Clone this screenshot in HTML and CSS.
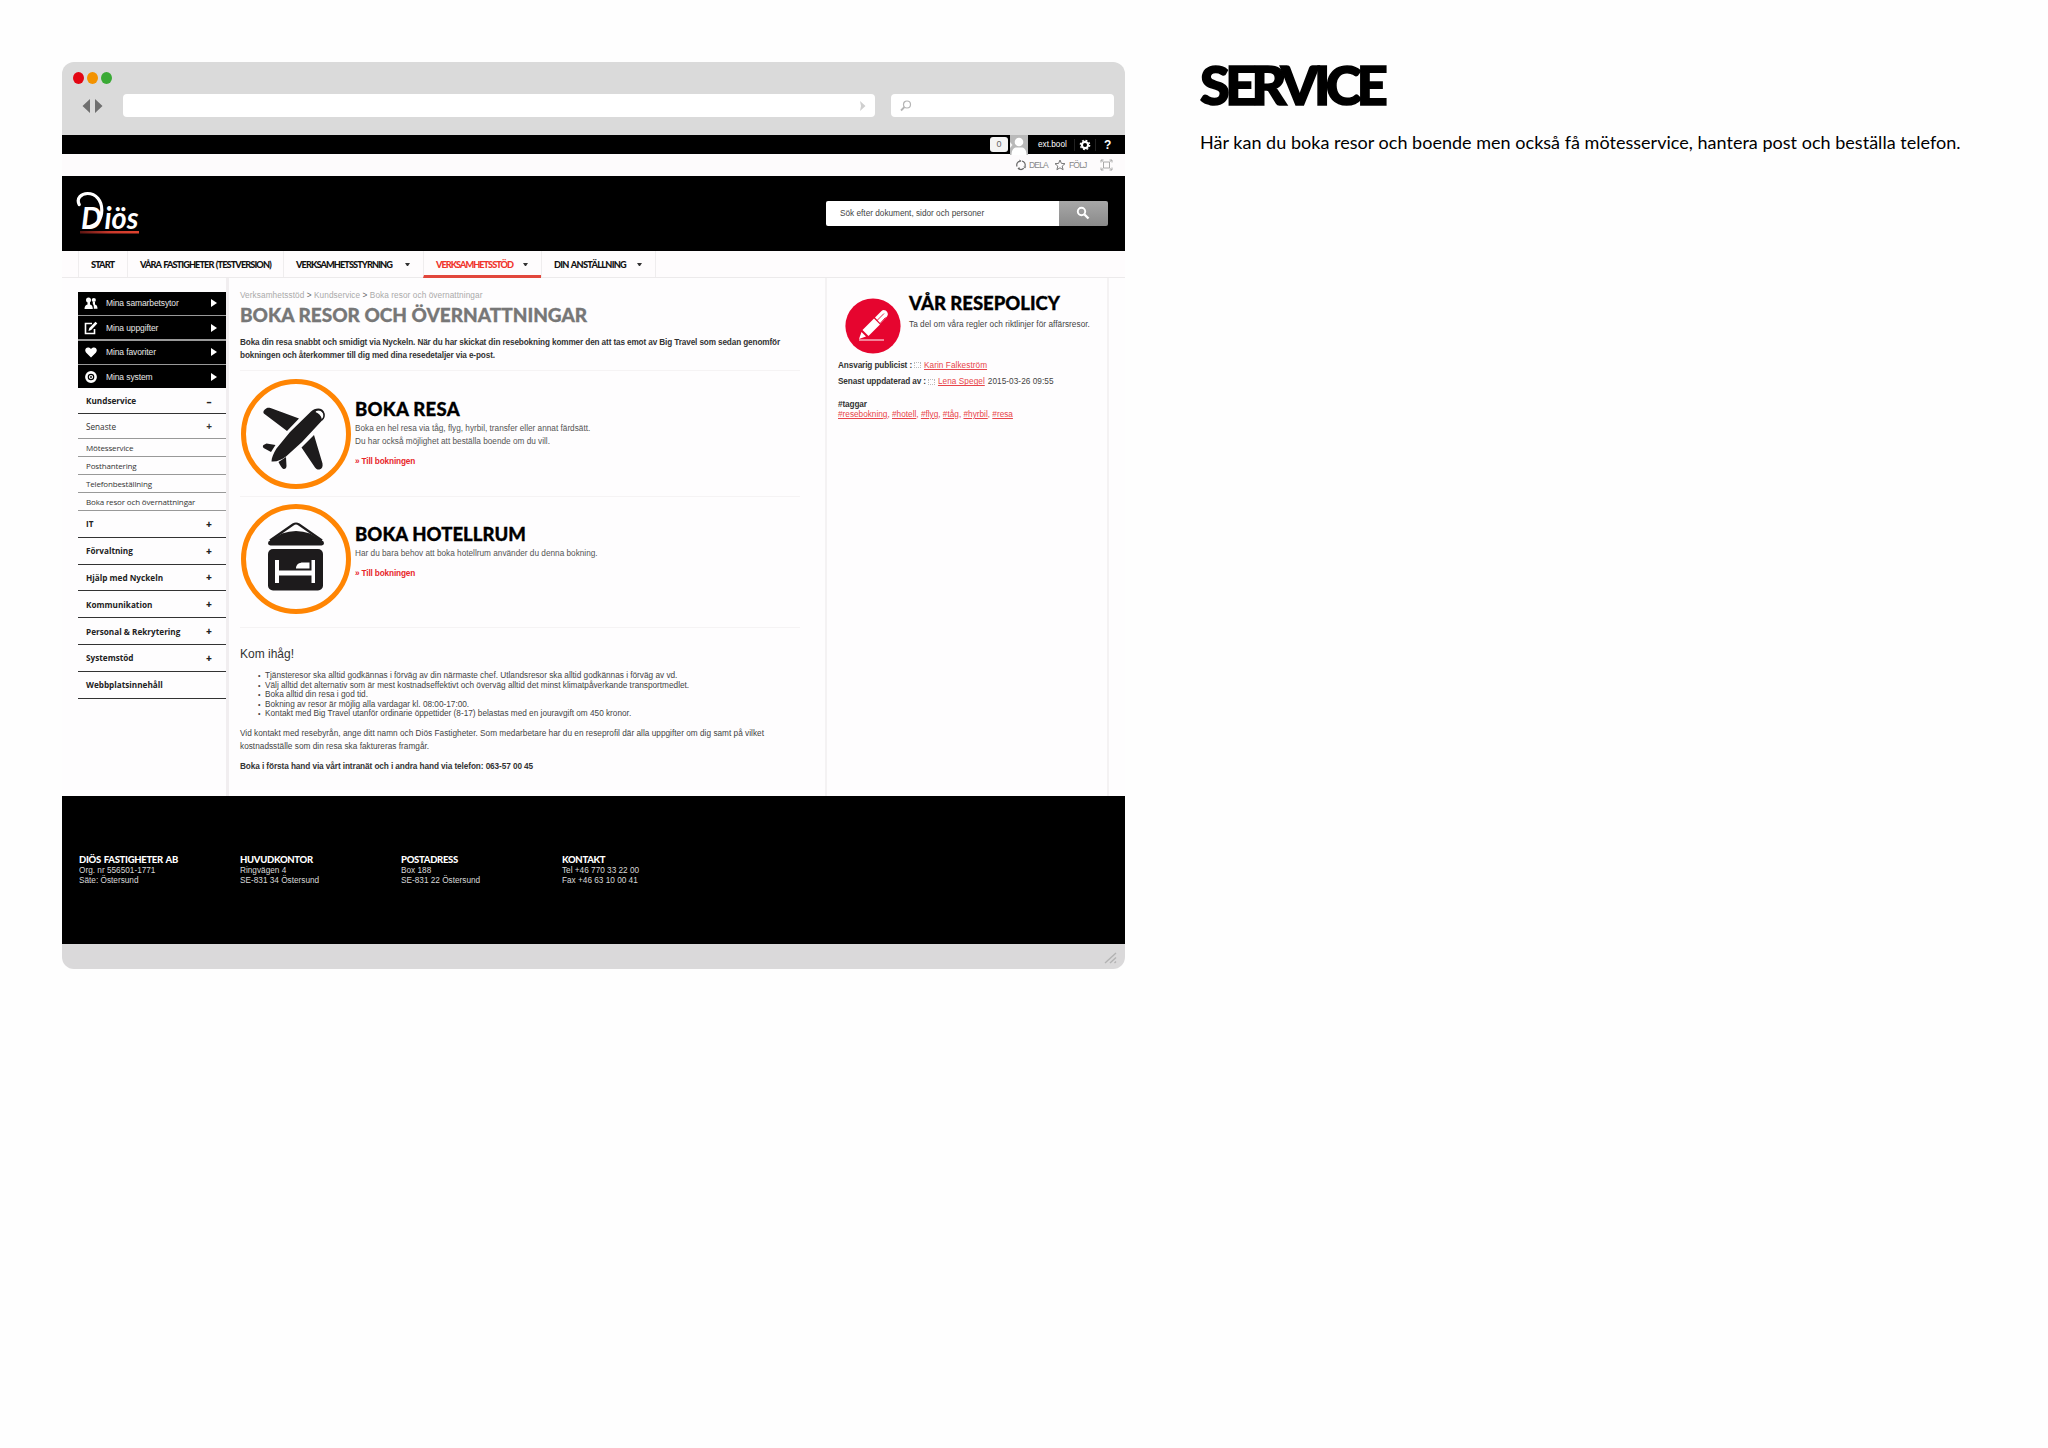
FILE: index.html
```html
<!DOCTYPE html>
<html lang="sv">
  <head>
    <meta charset="utf-8">
    <title>Service</title>
    <link rel="stylesheet" href="styles.css">
  </head>
  <body>
    <div class="browser">
      <div class="chrome">
        <div class="chrome__dots"><i class="red"></i><i class="orange"></i><i class="green"></i></div>
        <div class="chrome__bar">
          <svg class="chrome__arrows" width="22" height="16" viewBox="0 0 22 16"><path d="M8 1v14L0.500 8zM13 1v14l7.500-7z" fill="#6f6f6f"/></svg>
          <div class="chrome__url"><svg width="6" height="12" viewBox="0 0 6 12"><path d="M0 1l5.500 5L0 11l1-5z" fill="#cfcfcf"/></svg></div>
          <div class="chrome__search"><svg width="12" height="12" viewBox="0 0 12 12"><circle cx="7" cy="4.500" r="3.500" fill="none" stroke="#b5b5b5" stroke-width="1.200"/><path d="M4.500 7L1 10.500" stroke="#b5b5b5" stroke-width="1.800"/></svg></div>
        </div>
      </div>

      <div class="userbar">
        <span class="userbar__count">0</span>
        <svg class="userbar__avatar" width="18" height="20" viewBox="0 0 18 20"><path fill="#b9b9b9" d="M0 0h18v20H0z"/><path d="M0 7l2.500 3L0 13z" fill="#f4f4f4"/><circle cx="9" cy="7" r="4.300" fill="#fff"/><path d="M1.500 20c0-6 3-7.500 5-7.500h5c2 0 5 1.500 5 7.500z" fill="#fff"/></svg>
        <span class="userbar__name">ext.bool</span>
        <span class="userbar__gear"><svg width="12" height="12" viewBox="0 0 12 12"><circle cx="6" cy="6" r="3.100" fill="none" stroke="#fff" stroke-width="2.200"/><circle cx="6" cy="6" r="4.700" fill="none" stroke="#fff" stroke-width="1.300" stroke-dasharray="1.850 1.840"/></svg></span>
        <span class="userbar__help">?</span>
      </div>

      <div class="tools">
        <svg width="12" height="12" viewBox="0 0 12 12"><g fill="none" stroke="#666" stroke-width="1.200"><path d="M5 2A4.200 4.200 0 0 0 2 7.500"/><path d="M7 2A4.200 4.200 0 0 1 10 7.500"/><path d="M3.200 9.300A4.200 4.200 0 0 0 8.800 9.300"/></g><path d="M4.500.5v3L6.500 2zM8.300 7.500h3L10 9.500zM4.500 8v3L2.500 9.500z" fill="#666"/></svg>
        <span class="tools__dela">DELA</span>
        <svg width="12" height="12" viewBox="0 0 12 12"><path d="M6 1l1.400 3.400 3.600.3-2.800 2.400.9 3.600L6 8.800l-3.100 1.900.9-3.600L1 4.700l3.600-.3z" fill="none" stroke="#777"/></svg>
        <span class="tools__folj">FÖLJ</span>
        <svg width="13" height="12" viewBox="0 0 13 12"><g fill="none" stroke="#aaa"><path d="M3.500 3h6v6h-6zM1 3.500V1h2.500M9.500 1H12v2.500M12 8.500V11H9.500M3.500 11H1V8.500"/><path d="M1 1l2.500 2M12 1L9.500 3M12 11L9.500 9M1 11l2.500-2" stroke-width=".8"/></g></svg>
      </div>

      <div class="header">
        <svg class="logo" width="66" height="46" viewBox="0 0 66 46">
          <defs><linearGradient id="line"><stop offset="0" stop-color="#5a1512"/><stop offset=".5" stop-color="#c8382b"/><stop offset="1" stop-color="#e0432f"/></linearGradient></defs>
          <path d="M3.200 14.500C0 8 5.500 3.500 11.500 3.500c8.500 0 14.300 7 14.300 16.500 0 10-6 16.500-15 16.800" fill="none" stroke="#fff" stroke-width="3.200" stroke-linecap="round"/>
          <text class="logo__d" x="5" y="38.500" textLength="21" lengthAdjust="spacingAndGlyphs">D</text>
          <text class="logo__ios" x="28.500" y="38.500" textLength="34" lengthAdjust="spacingAndGlyphs">iös</text>
          <path d="M4 41h59v2.500H4z" fill="url(#line)"/>
        </svg>
        <div class="search">
          <div class="search__field">Sök efter dokument, sidor och personer</div>
          <div class="search__button"><svg width="14" height="14" viewBox="0 0 14 14"><circle cx="5.500" cy="5.500" r="3.700" fill="none" stroke="#fff" stroke-width="1.900"/><path d="M8.500 8.500L12.500 12.500" stroke="#fff" stroke-width="2.400"/></svg></div>
        </div>
      </div>

      <div class="nav">
        <div class="nav__item nav__item--start"><span>START</span></div>
        <div class="nav__item nav__item--vara"><span>VÅRA FASTIGHETER (TESTVERSION)</span></div>
        <div class="nav__item nav__item--styrning"><span>VERKSAMHETSSTYRNING</span><i></i></div>
        <div class="nav__item nav__item--active"><span>VERKSAMHETSSTÖD</span><i></i></div>
        <div class="nav__item nav__item--din"><span>DIN ANSTÄLLNING</span><i></i></div>
      </div>

      <div class="page">
        <div class="sidebar">
          <div class="mine">
            <div class="mine__row"><svg width="14" height="14" viewBox="0 0 14 14"><g fill="#fff"><circle cx="4.500" cy="4" r="2.500"/><path d="M.5 13c0-3 1-3.800 3-4.500V6h2.500v2.500c2 .7 2.800 1.500 2.800 4.500z"/><circle cx="9.800" cy="4" r="2.100"/><path d="M9.800 12.800h3.700c0-3-.8-3.800-2.500-4.300V6H8.800v2c.8.800 1.200 2.300 1 4.800z"/></g></svg><span>Mina samarbetsytor</span><i></i></div>
            <div class="mine__row"><svg width="14" height="14" viewBox="0 0 14 14"><path d="M8 2.500H1.500v10h9V8" fill="none" stroke="#fff" stroke-width="1.600"/><path d="M4.500 10l.8-3L11.500.8l1.800 1.800L7.200 9z" fill="#fff"/></svg><span>Mina uppgifter</span><i></i></div>
            <div class="mine__row"><svg width="14" height="14" viewBox="0 0 14 14"><path d="M7 12.500L2 7.500C-.5 4 3.500.5 7 4c3.500-3.500 7.500 0 5 3.500z" fill="#fff"/></svg><span>Mina favoriter</span><i></i></div>
            <div class="mine__row"><svg width="14" height="14" viewBox="0 0 14 14"><circle cx="7" cy="7" r="4.600" fill="none" stroke="#fff" stroke-width="2.600"/><circle cx="7" cy="7" r="1.500" fill="none" stroke="#fff" stroke-width="1.200"/></svg><span>Mina system</span><i></i></div>
          </div>
          <div class="menu">
            <div class="menu__row menu__row--open"><span>Kundservice</span><b>–</b></div>
            <div class="menu__row menu__row--latest"><span>Senaste</span><b>+</b></div>
            <div class="menu__row menu__row--sub"><span>Mötesservice</span></div>
            <div class="menu__row menu__row--sub"><span>Posthantering</span></div>
            <div class="menu__row menu__row--sub"><span>Telefonbeställning</span></div>
            <div class="menu__row menu__row--sub"><span>Boka resor och övernattningar</span></div>
            <div class="menu__row"><span>IT</span><b>+</b></div>
            <div class="menu__row"><span>Förvaltning</span><b>+</b></div>
            <div class="menu__row"><span>Hjälp med Nyckeln</span><b>+</b></div>
            <div class="menu__row"><span>Kommunikation</span><b>+</b></div>
            <div class="menu__row"><span>Personal &amp; Rekrytering</span><b>+</b></div>
            <div class="menu__row"><span>Systemstöd</span><b>+</b></div>
            <div class="menu__row"><span>Webbplatsinnehåll</span></div>
          </div>
        </div>

        <div class="main">
          <div class="crumbs">Verksamhetsstöd <b>&gt;</b> Kundservice <b>&gt;</b> Boka resor och övernattningar</div>
          <h1>BOKA RESOR OCH ÖVERNATTNINGAR</h1>
          <p class="intro">Boka din resa snabbt och smidigt via Nyckeln. När du har skickat din resebokning kommer den att tas emot av Big Travel som sedan genomför<br>bokningen och återkommer till dig med dina resedetaljer via e-post.</p>

          <div class="booking booking--trip">
            <svg class="booking__icon" width="112" height="110" viewBox="0 0 112 110">
              <circle cx="56" cy="55" r="52.500" fill="none" stroke="#ff8503" stroke-width="5"/>
              <g fill="#1d1b1c">
                <path d="M71 32.500c3-3 8-4 11-2s3.500 7 .5 10.500L62 63 46 77.500c-4 3-9 5.500-14.500 5 0-4 2-8 5-13L50 53z"/>
                <path d="M25.500 30c1.500-1.500 3-1.500 5-1L59 39.500 47 52 24.500 35c-2-1.500-1-3.500 1-5z"/>
                <path d="M61.500 68.500L74 56l8.500 28.500c.5 3-.5 5.500-3 6-2 .3-3.500-.5-4.500-2z"/>
                <path d="M23.500 66l3-1.500 9 1.500-4.500 7-6.500-3.500c-2-1-2-2.500-1-3.500z"/>
                <path d="M38.500 83l7.500-5 .5 9c0 2-1.500 3.500-3 3-1.500-.4-3-3-5-7z"/>
              </g>
              <path d="M76.500 31.500c4-1 7 1.500 7 5.500l-1.500 3.500c-1-4-3-6-6.500-7.500z" fill="#fff"/>
              <path d="M75 32c5-3 10 1 9 6-.3 1-1 2-2 3" fill="none" stroke="#1d1b1c" stroke-width="1.200"/>
            </svg>
            <div class="booking__text">
              <h2>BOKA RESA</h2>
              <p>Boka en hel resa via tåg, flyg, hyrbil, transfer eller annat färdsätt.<br>Du har också möjlighet att beställa boende om du vill.</p>
              <a>» Till bokningen</a>
            </div>
          </div>

          <div class="booking booking--hotel">
            <svg class="booking__icon" width="112" height="110" viewBox="0 0 112 110">
              <circle cx="56" cy="55" r="52.500" fill="none" stroke="#ff8503" stroke-width="5"/>
              <path d="M30 36.500L53 20.500q3-2 6 0L82 36.500" fill="none" stroke="#1d1b1c" stroke-width="2.200"/>
              <path d="M42 29.500Q56 24.500 70 29.500L83.500 37.500q1.500 3.500-2 4h-51q-3.500-.5-2-4z" fill="#1d1b1c"/>
              <rect x="28" y="45" width="55" height="41.500" rx="5" fill="#1d1b1c"/>
              <path d="M35 56h4v10.500h32.500V56H75v23h-3.500v-7.500H39V79h-4zM56 64.500c0-4 3-6 7-6h6.500v6z" fill="#fff"/>
            </svg>
            <div class="booking__text">
              <h2 class="hotel">BOKA HOTELLRUM</h2>
              <p>Har du bara behov att boka hotellrum använder du denna bokning.</p>
              <a>» Till bokningen</a>
            </div>
          </div>

          <h3>Kom ihåg!</h3>
          <ul>
            <li>Tjänsteresor ska alltid godkännas i förväg av din närmaste chef. Utlandsresor ska alltid godkännas i förväg av vd.</li>
            <li>Välj alltid det alternativ som är mest kostnadseffektivt och överväg alltid det minst klimatpåverkande transportmedlet.</li>
            <li>Boka alltid din resa i god tid.</li>
            <li>Bokning av resor är möjlig alla vardagar kl. 08:00-17:00.</li>
            <li>Kontakt med Big Travel utanför ordinarie öppettider (8-17) belastas med en jouravgift om 450 kronor.</li>
          </ul>
          <p class="note">Vid kontakt med resebyrån, ange ditt namn och Diös Fastigheter. Som medarbetare har du en reseprofil där alla uppgifter om dig samt på vilket<br>kostnadsställe som din resa ska faktureras framgår.</p>
          <p class="phone">Boka i första hand via vårt intranät och i andra hand via telefon: 063-57 00 45</p>
        </div>

        <div class="aside">
          <div class="policy">
            <svg width="56" height="56" viewBox="0 0 56 56">
              <circle cx="28" cy="28" r="27.600" fill="#e6052f"/>
              <path d="M14 42h25" stroke="#fff" stroke-width="1"/>
              <g fill="#fff"><path d="M14 41l2.500-7 4.500 4.500z"/><path d="M17.500 32L29 20.500l6 6L23.500 38z"/><path d="M30 19.500l6.500-6.500c3-3 8.500 2 5.500 5.500l-6.500 7z"/></g>
              <path d="M32 22.500l7-7M35.500 25l5-5.500" stroke="#e6052f" stroke-width=".9"/>
            </svg>
            <div class="policy__text">
              <h2>VÅR RESEPOLICY</h2>
              <p>Ta del om våra regler och riktlinjer för affärsresor.</p>
            </div>
          </div>
          <p class="meta"><b>Ansvarig publicist :</b><i></i><a>Karin Falkeström</a></p>
          <p class="meta"><b>Senast uppdaterad av :</b><i></i><a>Lena Spegel</a><span>2015-03-26 09:55</span></p>
          <div class="tags"><b>#taggar</b><br><a>#resebokning</a>, <a>#hotell</a>, <a>#flyg</a>, <a>#tåg</a>, <a>#hyrbil</a>, <a>#resa</a></div>
        </div>
      </div>

      <div class="footer">
        <div><h4>DIÖS FASTIGHETER AB</h4>Org. nr 556501-1771<br>Säte: Östersund</div>
        <div><h4>HUVUDKONTOR</h4>Ringvägen 4<br>SE-831 34 Östersund</div>
        <div><h4>POSTADRESS</h4>Box 188<br>SE-831 22 Östersund</div>
        <div><h4>KONTAKT</h4>Tel +46 770 33 22 00<br>Fax +46 63 10 00 41</div>
      </div>
      <div class="status"><svg width="14" height="12" viewBox="0 0 14 12"><path d="M1 11L12 1M6 11l6-5.500M10.500 11l1.500-1.500" stroke="#b3b3b3" stroke-width="1.400"/></svg></div>
    </div>

    <div class="caption">
      <h1>SERVICE</h1>
      <p>Här kan du boka resor och boende men också få mötesservice, hantera post och beställa telefon.</p>
    </div>
  </body>
</html>
```
FILE: styles.css
```css
* {
  margin: 0;
  padding: 0;
  box-sizing: border-box;
}
body {
  display: flex;
  align-items: flex-start;
  gap: 75px;
  width: 2048px;
  height: 1448px;
  padding: 62px 0 0 62px;
  background: #fefefe;
  font-family: "Liberation Sans", Arial, sans-serif;
  font-size: 8.24px;
  color: #444;
  white-space: nowrap;
  overflow: hidden;
}
svg {
  display: block;
  flex: none;
}
h1, h2, h4 {
  font-family: Lato, sans-serif;
  font-weight: 900;
}

/* Browser window */
.browser {
  flex: none;
  width: 1063px;
  height: 907px;
  border-radius: 12px;
  background: #fefdfe;
  overflow: hidden;
}
.chrome {
  height: 73px;
  padding: 10px 10px 0 11px;
  background: #dadada;
}
.chrome__dots {
  display: flex;
  gap: 3px;
}
.chrome__dots i {
  width: 11px;
  height: 12px;
  border-radius: 50%;
}
.red { background: #e30613; }
.orange { background: #f39200; }
.green { background: #3aaa35; }
.chrome__bar {
  display: flex;
  align-items: center;
  height: 23px;
  margin-top: 10px;
}
.chrome__arrows {
  margin: 0 19px 0 9px;
}
.chrome__url, .chrome__search {
  display: flex;
  align-items: center;
  height: 23px;
  border-radius: 4px;
  background: #fff;
}
.chrome__url {
  width: 752px;
  padding-right: 9px;
  justify-content: flex-end;
}
.chrome__search {
  width: 223px;
  margin-left: 16px;
  padding-left: 9px;
}
.userbar {
  display: flex;
  align-items: center;
  justify-content: flex-end;
  height: 19px;
  padding-right: 1px;
  background: #000;
  color: #fff;
}
.userbar__count {
  width: 18px;
  height: 15px;
  margin-right: 2px;
  border-radius: 3px;
  background: #f4f4f4;
  color: #666;
  font-size: 9px;
  line-height: 14px;
  text-align: center;
}
.userbar__name {
  width: 46px;
  padding-left: 10px;
}
.userbar__gear {
  display: flex;
  justify-content: center;
  width: 22px;
  border: solid #222;
  border-width: 0 1px;
}
.userbar__help {
  width: 28px;
  padding-left: 8px;
  font-size: 12px;
  font-weight: 700;
}
.tools {
  display: flex;
  align-items: center;
  height: 22px;
  padding-left: 953px;
  background: #fdfbfc;
  color: #888;
  font-size: 8.6px;
  letter-spacing: -.9px;
}
.tools__dela {
  width: 25px;
  margin-left: 2px;
}
.tools__folj {
  width: 31px;
  margin-left: 3px;
}
.header {
  display: flex;
  justify-content: space-between;
  height: 75px;
  padding: 14px 17px 0 14px;
  background: #000;
}
.logo text {
  fill: #fff;
  font-family: Lato, sans-serif;
  font-style: italic;
  font-weight: 700;
}
.logo .logo__d {
  font-size: 31px;
}
.logo .logo__ios {
  font-size: 30px;
}
.search {
  display: flex;
  width: 282px;
  height: 25px;
  margin-top: 11px;
  border-radius: 2px;
  overflow: hidden;
}
.search__field {
  flex: 1;
  padding-left: 14px;
  background: #fff;
  line-height: 26px;
}
.search__button {
  width: 49px;
  padding: 5px 0 0 17px;
  background: linear-gradient(#a8a8a8, #8a8a8a);
}
.nav {
  display: flex;
  height: 27px;
  padding-left: 16px;
  border-bottom: 1px solid #eceaeb;
  background: #fefcfd;
}
.nav__item {
  display: flex;
  align-items: center;
  padding: 0 13px 0 12px;
  border-left: 1px solid #efedee;
  color: #111;
  font-family: Lato, sans-serif;
  font-size: 9.2px;
  font-weight: 900;
  letter-spacing: -.92px;
  word-spacing: 1px;
}
.nav__item i {
  width: 5px;
  margin-left: auto;
  border: 2.5px solid transparent;
  border-top: 3px solid #333;
  border-bottom: 0;
}
.nav__item--start { width: 49px; }
.nav__item--vara {
  width: 156px;
  letter-spacing: -.9px;
}
.nav__item--styrning { width: 140px; }
.nav__item--active {
  width: 118px;
  height: 27px;
  padding-top: 3px;
  border-bottom: 3px solid #e2473c;
  color: #f0342c;
  letter-spacing: -1px;
}
.nav__item--din {
  width: 115px;
  border-right: 1px solid #efedee;
  letter-spacing: -.73px;
}

/* Content columns */
.page {
  display: flex;
  height: 518px;
  padding-left: 16px;
}
.sidebar {
  width: 151px;
  padding-top: 14px;
  border-right: 3px solid #f1eef0;
}
.mine {
  display: grid;
  gap: 1.5px;
  height: 96px;
  background: #999;
}
.mine__row {
  display: flex;
  align-items: center;
  padding-left: 6px;
  background: #000;
  color: #e8e8e8;
  font-size: 8.5px;
  letter-spacing: -.11px;
}
.mine__row span {
  margin-left: 8px;
}
.mine__row i {
  margin-left: auto;
  margin-right: 9px;
  border: 4px solid transparent;
  border-left: 6px solid #fff;
  border-right: 0;
}
.menu {
  font-family: "Open Sans", sans-serif;
  font-size: 8.2px;
}
.menu__row {
  display: flex;
  align-items: center;
  justify-content: space-between;
  height: 26.8px;
  padding: 0 13px 0 8px;
  border-bottom: 1.5px solid #333;
  color: #222;
  font-weight: 700;
}
.menu__row b {
  width: 8px;
  font-size: 10px;
  line-height: 10px;
  text-align: center;
}
.menu__row--open {
  height: 26px;
}
.menu__row--latest, .menu__row--sub {
  border-bottom: 1px solid #999;
  color: #333;
  font-weight: 400;
}
.menu__row--latest {
  height: 25px;
}
.menu__row--sub {
  height: 18px;
  font-size: 8px;
  letter-spacing: -.15px;
}
.main {
  width: 596px;
  padding: 10px 25px 0 11px;
}
.crumbs {
  height: 14px;
  line-height: 15px;
  color: #aaa;
  letter-spacing: .08px;
}
.crumbs b {
  color: #666;
  font-weight: 400;
}
.main h1 {
  height: 24px;
  margin-top: 1px;
  color: #777;
  font-size: 19px;
  line-height: 24px;
  -webkit-text-stroke: .3px #777;
}
.intro {
  margin-top: 9px;
  color: #333;
  font-size: 8.2px;
  font-weight: 700;
  letter-spacing: -.12px;
  line-height: 13px;
}
.booking {
  display: flex;
  border-top: 1px solid #f5f3f4;
}
.booking--trip {
  height: 126px;
  margin-top: 8px;
  padding-top: 8px;
}
.booking--hotel {
  height: 132px;
  padding-top: 7px;
  border-bottom: 1px solid #f5f3f4;
}
.booking__text {
  padding: 19px 0 0 3px;
}
h2 {
  color: #000;
  font-size: 18.5px;
  line-height: 23px;
  -webkit-text-stroke: .3px #000;
}
.booking h2 {
  height: 24px;
  letter-spacing: .28px;
}
.booking .hotel {
  letter-spacing: .05px;
}
.booking p {
  color: #555;
  line-height: 13px;
}
.booking a {
  display: block;
  margin-top: 7px;
  color: #e8262a;
  font-weight: 700;
  letter-spacing: -.15px;
  line-height: 13px;
}
h3 {
  margin-top: 18px;
  color: #333;
  font-size: 12px;
  font-weight: 400;
  line-height: 16px;
}
.main ul {
  margin-top: 9px;
  padding-left: 25px;
  line-height: 9.6px;
  list-style: none;
}
.main li {
  display: flex;
}
.main li::before {
  content: "•";
  width: 7px;
  margin-left: -7px;
  font-size: 7px;
}
.note {
  margin-top: 8px;
  line-height: 13px;
  letter-spacing: .02px;
}
.phone {
  margin-top: 7px;
  color: #333;
  font-weight: 700;
  letter-spacing: -.09px;
  line-height: 13px;
}
.aside {
  width: 284px;
  padding: 14px 0 0 11px;
  border: solid #f4f2f3;
  border-width: 0 2px;
}
.policy {
  display: flex;
  gap: 8px;
  padding-left: 7px;
}
.policy svg {
  margin-top: 6px;
}
.policy p {
  margin-top: 3px;
  letter-spacing: .04px;
  line-height: 13px;
}
.meta {
  display: flex;
  align-items: center;
  height: 16.5px;
}
.policy + .meta {
  margin-top: 3px;
}
.meta i {
  width: 7px;
  height: 6px;
  margin: 0 3px 0 2px;
  border: 1px dotted #bbb;
}
.meta a, .meta span {
  letter-spacing: .05px;
}
.meta span {
  margin-left: 3px;
}
.aside b {
  color: #333;
  letter-spacing: -.12px;
}
.aside a {
  color: #e8454a;
  text-decoration: underline;
}
.tags {
  margin-top: 10px;
  color: #e8454a;
  line-height: 10px;
}

.footer {
  display: flex;
  height: 148px;
  padding: 58px 0 0 17px;
  background: #000;
  color: #d8d8d8;
  line-height: 10px;
}
.footer div {
  width: 161px;
}
.footer h4 {
  color: #fff;
  font-size: 9.5px;
  letter-spacing: -.3px;
  line-height: 12px;
  word-spacing: 1px;
}
.status {
  display: flex;
  justify-content: flex-end;
  height: 26px;
  padding: 8px 7px 0 0;
  background: #dad9da;
}

/* Caption beside the window */
.caption {
  color: #000;
}
.caption h1 {
  font-size: 54px;
  letter-spacing: -4.6px;
  line-height: 46px;
  -webkit-text-stroke: 1.6px #000;
}
.caption p {
  margin-top: 21px;
  font-family: Lato, sans-serif;
  font-size: 18px;
  letter-spacing: .02px;
  line-height: 26px;
}
```
